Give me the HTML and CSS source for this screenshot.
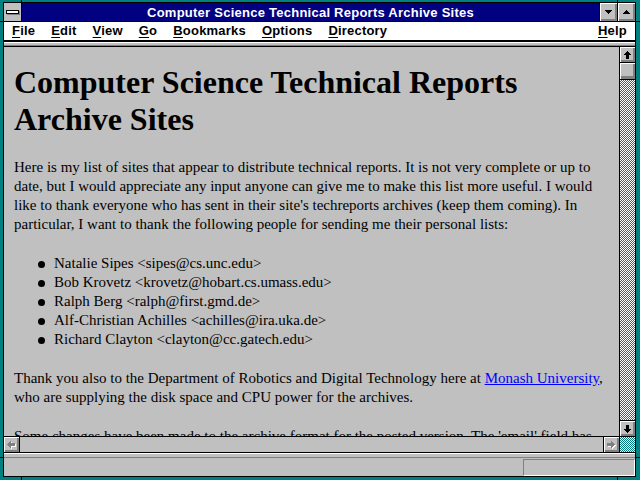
FILE: index.html
```
<!DOCTYPE html>
<html lang="en">
<head>
  <meta charset="UTF-8">
  <title>Computer Science Technical Reports Archive Sites</title>
  <link rel="stylesheet" href="styles.css">
</head>
<body>
  <div class="window">
    <div class="frame">
      <div class="titlebar">
        <div class="sysmenu"><span class="sysmenu-bar"></span></div>
        <div class="title">Computer Science Technical Reports Archive Sites</div>
        <div class="title-btn">
          <svg width="7" height="4" viewBox="0 0 7 4" shape-rendering="crispEdges"><path d="M0 0h7v1H0z M1 1h5v1H1z M2 2h3v1H2z M3 3h1v1H3z" fill="#000"/></svg>
        </div>
        <div class="title-btn">
          <svg width="7" height="4" viewBox="0 0 7 4" shape-rendering="crispEdges"><path d="M3 0h1v1H3z M2 1h3v1H2z M1 2h5v1H1z M0 3h7v1H0z" fill="#000"/></svg>
        </div>
      </div>

      <div class="menubar">
        <span class="menu-item"><span class="key">F</span>ile</span>
        <span class="menu-item"><span class="key">E</span>dit</span>
        <span class="menu-item"><span class="key">V</span>iew</span>
        <span class="menu-item"><span class="key">G</span>o</span>
        <span class="menu-item"><span class="key">B</span>ookmarks</span>
        <span class="menu-item"><span class="key">O</span>ptions</span>
        <span class="menu-item"><span class="key">D</span>irectory</span>
        <span class="menu-item menu-help"><span class="key">H</span>elp</span>
      </div>
      <div class="toolbar-edge"></div>

      <div class="viewport">
        <div class="page">
          <h1>Computer Science Technical Reports Archive Sites</h1>
          <p>Here is my list of sites that appear to distribute technical reports. It is not very complete or up to date, but I would appreciate any input anyone can give me to make this list more useful. I would like to thank everyone who has sent in their site's techreports archives (keep them coming). In particular, I want to thank the following people for sending me their personal lists:</p>
          <ul>
            <li>Natalie Sipes &lt;sipes@cs.unc.edu&gt;</li>
            <li>Bob Krovetz &lt;krovetz@hobart.cs.umass.edu&gt;</li>
            <li>Ralph Berg &lt;ralph@first.gmd.de&gt;</li>
            <li>Alf-Christian Achilles &lt;achilles@ira.uka.de&gt;</li>
            <li>Richard Clayton &lt;clayton@cc.gatech.edu&gt;</li>
          </ul>
          <p>Thank you also to the Department of Robotics and Digital Technology here at <a href="#">Monash University</a>, who are supplying the disk space and CPU power for the archives.</p>
          <p>Some changes have been made to the archive format for the posted version. The 'email' field has been added to each entry.</p>
        </div>
        <div class="vscroll">
          <div class="sbtn sbtn-up">
            <svg width="7" height="8" viewBox="0 0 7 8" shape-rendering="crispEdges"><path d="M3 0h1v1H3z M2 1h3v1H2z M1 2h5v1H1z M0 3h7v1H0z M2 4h3v4H2z" fill="#000"/></svg>
          </div>
          <div class="thumb"></div>
          <div class="track"></div>
          <div class="sbtn sbtn-down">
            <svg width="7" height="8" viewBox="0 0 7 8" shape-rendering="crispEdges"><path d="M2 0h3v4H2z M0 4h7v1H0z M1 5h5v1H1z M2 6h3v1H2z M3 7h1v1H3z" fill="#000"/></svg>
          </div>
        </div>
      </div>

      <div class="hscroll">
        <div class="sbtn hbtn-left">
          <svg width="9" height="8" viewBox="0 0 9 8" shape-rendering="crispEdges">
            <path d="M1 4h1v1H1z M2 3h1v3H2z M3 2h1v5H3z M4 1h1v7H4z M5 3h4v3H5z" fill="#fff"/>
            <path d="M0 3h1v1H0z M1 2h1v3H1z M2 1h1v5H2z M3 0h1v7H3z M4 2h4v3H4z" fill="#808080"/>
          </svg>
        </div>
        <div class="htrack"></div>
        <div class="sbtn hbtn-right">
          <svg width="9" height="8" viewBox="0 0 9 8" shape-rendering="crispEdges">
            <path d="M8 4h1v1H8z M7 3h1v3H7z M6 2h1v5H6z M5 1h1v7H5z M1 3h4v3H1z" fill="#fff"/>
            <path d="M7 3h1v1H7z M6 2h1v3H6z M5 1h1v5H5z M4 0h1v7H4z M0 2h4v3H0z" fill="#808080"/>
          </svg>
        </div>
        <div class="corner"></div>
      </div>

      <div class="status-edge"></div>
      <div class="statusbar">
        <div class="status-box"></div>
      </div>
    </div>
  </div>
</body>
</html>
```

FILE: styles.css
```
* {
  box-sizing: border-box;
}
html, body {
  width: 640px;
  height: 480px;
  margin: 0;
  padding: 0;
  overflow: hidden;
}

/* teal sizing frame with the corner notches */
.window {
  width: 640px;
  height: 480px;
  padding: 2px 4px 3px 3px;
  background:
    linear-gradient(#000, #000) 21px 0 / 1px 100% no-repeat,
    linear-gradient(#000, #000) 617px 0 / 1px 100% no-repeat,
    linear-gradient(#000, #000) 0 21px / 100% 1px no-repeat,
    linear-gradient(#000, #000) 0 457px / 100% 1px no-repeat,
    #008080;
}
.frame {
  height: 100%;
  border: 1px solid #000;
  background: #c0c0c0;
  display: flex;
  flex-direction: column;
}

/* caption */
.titlebar {
  flex: none;
  height: 19px;
  border-bottom: 1px solid #000;
  background: #000080;
  display: flex;
}
.sysmenu {
  width: 18px;
  border-right: 1px solid #000;
  background: #c0c0c0;
  display: flex;
  align-items: center;
  justify-content: center;
}
.sysmenu-bar {
  width: 13px;
  height: 4px;
  background: #fff;
  border: 1px solid #000;
  box-shadow: 1px 1px #808080;
}
.title {
  flex: 1;
  padding-top: 2px;
  color: #fff;
  font: bold 13px/16px "Liberation Sans", Arial, sans-serif;
  letter-spacing: 0.25px;
  text-align: center;
  white-space: nowrap;
}
.title-btn {
  width: 18px;
  border-left: 1px solid #000;
  background: #c0c0c0;
  box-shadow: inset 1px 1px #fff, inset -2px -2px #808080;
  display: flex;
  align-items: center;
  justify-content: center;
}

/* menu */
.menubar {
  flex: none;
  height: 20px;
  border-bottom: 2px solid #000;
  background: #fff;
  display: flex;
  font: bold 13px/18px "Liberation Sans", Arial, sans-serif;
  letter-spacing: 0.2px;
  color: #000;
}
.menu-item {
  padding: 0 8px;
  white-space: nowrap;
}
.menu-help {
  margin-left: auto;
}
.key {
  text-decoration: underline;
  text-underline-offset: 2px;
}
.toolbar-edge {
  flex: none;
  height: 5px;
  background: linear-gradient(#fff 0 1px, #c0c0c0 1px 3px, #808080 3px 4px, #000 4px 5px);
}

/* document area */
.viewport {
  flex: 1;
  min-height: 0;
  display: flex;
}
.page {
  flex: 1;
  overflow: hidden;
  padding: 17px 12px 0 10px;
  font-family: "Liberation Serif", "Times New Roman", serif;
  font-size: 15px;
  line-height: 19px;
  color: #000;
}
.page h1 {
  margin: 0 0 20px;
  font-size: 32px;
  line-height: 37px;
  font-weight: bold;
}
.page p {
  margin: 0 0 20px;
}
.page ul {
  margin: 0 0 20px;
  padding-left: 40px;
  list-style: none;
}
/* big round bullets */
.page li::before {
  content: "";
  display: inline-block;
  width: 7px;
  height: 7px;
  margin: 0 9px 1px -16px;
  border-radius: 50%;
  background: #000;
  vertical-align: middle;
}
.page a {
  color: #0000ff;
  text-decoration: underline;
}

/* scroll bars */
.sbtn {
  flex: none;
  background: #c0c0c0;
  box-shadow: inset 1px 1px #fff, inset -2px -2px #808080;
  display: flex;
  align-items: center;
  justify-content: center;
}
.vscroll {
  flex: none;
  width: 16px;
  border-left: 1px solid #000;
  display: flex;
  flex-direction: column;
}
.sbtn-up {
  height: 16px;
  border-bottom: 1px solid #000;
}
.sbtn-down {
  height: 16px;
  border-top: 1px solid #000;
}
.thumb {
  flex: none;
  height: 17px;
  border-bottom: 1px solid #000;
  background: #c0c0c0;
  box-shadow: inset 1px 1px #fff, inset -2px -3px #808080;
}
.track,
.corner {
  background: repeating-conic-gradient(#008080 0 25%, #fff 0 50%) 0 0 / 2px 2px;
}
.track {
  flex: 1;
}
.hscroll {
  flex: none;
  height: 17px;
  border-top: 1px solid #000;
  border-bottom: 1px solid #000;
  display: flex;
}
.hbtn-left {
  width: 16px;
  border-right: 1px solid #000;
}
.hbtn-right {
  width: 16px;
  border-left: 1px solid #000;
}
.htrack {
  flex: 1;
  background: #c0c0c0;
}
.corner {
  width: 16px;
  border-left: 1px solid #000;
}

/* status line */
.status-edge {
  flex: none;
  height: 5px;
  background: linear-gradient(#fff 0 1px, #c0c0c0 1px 4px, #808080 4px 5px);
}
.statusbar {
  flex: none;
  height: 18px;
  padding-top: 1px;
  display: flex;
  justify-content: flex-end;
}
.status-box {
  width: 112px;
  height: 17px;
  border: 1px solid;
  border-color: #808080 #fff #fff #808080;
}
```
